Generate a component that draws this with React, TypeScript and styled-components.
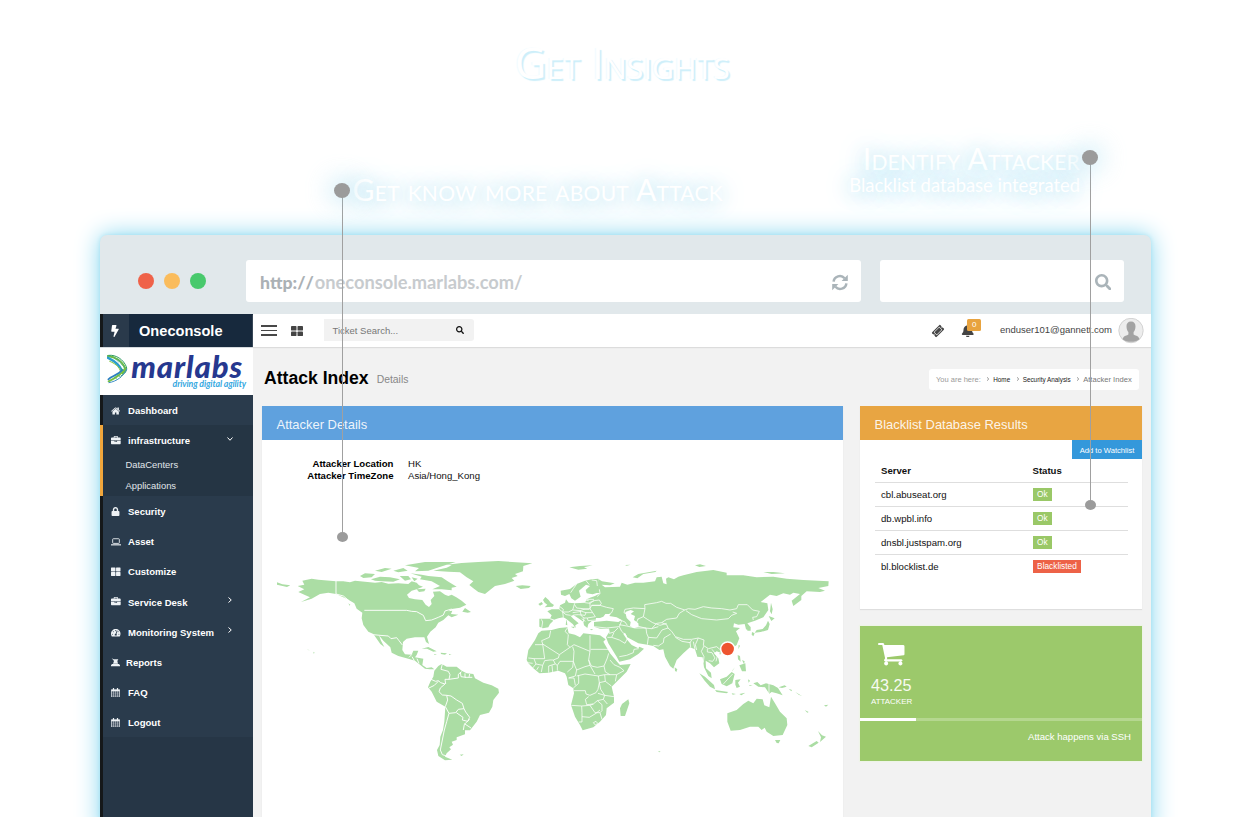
import React from 'react';
import styled, { createGlobalStyle, css } from 'styled-components';
import {
  FaBolt,
  FaLock,
  FaThLarge,
  FaTachometerAlt,
  FaSearch,
  FaBell,
  FaTicketAlt,
} from 'react-icons/fa';

const GlobalStyle = createGlobalStyle`
  * { box-sizing: border-box; }
  body { margin: 0; background: #fff; font-family: "Liberation Sans", Arial, sans-serif; }
  svg { display: block; flex: none; }
`;

const Page = styled.div`
  position: relative;
  width: 1250px;
  height: 817px;
  overflow: hidden;
  background: #fff;
  white-space: nowrap;
`;

const Hero = styled.header`
  height: 235px;
  padding: 37px 5px 0 0;
  text-align: center;
`;

const HeroTitle = styled.h1`
  margin: 0;
  font: 400 43px/52px "Open Sans", sans-serif;
  font-variant: small-caps;
  letter-spacing: 0.25px;
  color: #fff;
  text-shadow: 2px 2px 1px #cdeffa, -1px 0 1px #f2fbff;
`;

/* ---- browser frame ---- */

const Browser = styled.section`
  width: 1051px;
  height: 600px;
  margin-left: 100px;
  border-radius: 7px 7px 0 0;
  background: #e1e8eb;
  box-shadow: 0 0 24px 0 #83d5ef, 0 0 4px #c0ebf6;
`;

const Chrome = styled.div`
  display: flex;
  align-items: flex-start;
  height: 79px;
  padding: 25px 27px 0 38px;
`;

const Lights = styled.div`
  display: flex;
  flex: none;
  gap: 10px;
  width: 108px;
  padding-top: 13px;
`;

const Light = styled.i<{ $color: string }>`
  width: 16px;
  height: 16px;
  border-radius: 50%;
  background: ${(p) => p.$color};
`;

const ChromeField = styled.div<{ $width: number }>`
  display: flex;
  flex: none;
  align-items: center;
  width: ${(p) => p.$width}px;
  height: 42px;
  margin-right: 19px;
  padding: 2px 13px 0 14px;
  border-radius: 3px;
  background: #fff;
  color: #aab4b9;

  svg { margin-left: auto; }
`;

const Url = styled.span`
  font: 700 18.25px/22px Lato, sans-serif;
  color: #c7cbce;

  b {
    margin-right: 1px;
    color: #abb1b5;
    font-size: 17.6px;
    font-weight: 900;
    font-kerning: none;
  }
`;

const Console = styled.div`
  display: flex;
  height: 521px;
  background: #f2f2f2;
`;

/* ---- sidebar ---- */

const Sidebar = styled.aside`
  width: 153px;
  background: #263646;
`;

const Brand = styled.div`
  display: flex;
  align-items: center;
  height: 33px;
  border-left: 3px solid #15181a;
  background: #17293d;
  color: #fff;
  font-size: 14.6px;
  font-weight: 700;
`;

const BrandIcon = styled.span`
  display: grid;
  place-items: center;
  width: 26px;
  height: 33px;
  margin-right: 10px;
  padding-right: 3px;
  background: #2a3a4b;
`;

const Logo = styled.div`
  display: flex;
  height: 48px;
  padding: 6px 0 0 7px;
  background: #fff;
  border-top: 1px solid #d5dade;
`;

const LogoWords = styled.div`
  display: flex;
  flex: none;
  flex-direction: column;
  align-items: flex-end;
  width: 118px;
`;

const LogoName = styled.span`
  margin: -1px 3px 0 0;
  font: italic 900 31px/26px Lato, sans-serif;
  letter-spacing: 0.9px;
  color: #26388f;
`;

const LogoTag = styled.span`
  font: italic 700 8.8px/9px Lato, sans-serif;
  letter-spacing: -0.1px;
  color: #35a8df;
`;

const Menu = styled.nav`
  height: 422px;
  border-left: 3px solid #15181a;
`;

const Group = styled.div<{ $open?: boolean }>`
  background: #2a3b4c;
  ${(p) =>
    p.$open &&
    css`
      height: 71px;
      margin-left: -3px;
      border-left: 3px solid #f0a63c;
      background: #253544;
    `}
`;

const MenuItem = styled.div`
  display: flex;
  align-items: center;
  height: 30.15px;
  padding: 1px 20px 0 8px;
  color: #fff;
  font-size: 9.55px;
  font-weight: 700;

  > svg:last-child:not(:first-child) { margin: -4px 0 0 auto; }
`;

const MenuIcon = styled.span<{ $gap?: number }>`
  display: flex;
  width: ${(p) => p.$gap ?? 17}px;
  color: #eef2f5;
`;

const SubItem = styled.div`
  height: 20.4px;
  padding-left: 22.5px;
  font-size: 9.4px;
  line-height: 19px;
  color: #e1e6ea;
`;

/* ---- main column ---- */

const Main = styled.main`
  width: 898px;
`;

const TopBar = styled.div`
  display: flex;
  align-items: center;
  height: 33px;
  padding: 0 7px 0 8px;
  background: #fff;
  box-shadow: 0 1px 1px #dcdcdc;
  font-size: 9.5px;
  color: #444;
`;

const Burger = styled.span`
  width: 16px;
  height: 11px;
  margin: -1px 14px 0 0;
  background: linear-gradient(#484848 1.6px, transparent 1.6px 4.7px, #484848 4.7px 6.3px, transparent 6.3px 9.4px, #484848 9.4px);
`;

const SearchBox = styled.div`
  display: flex;
  align-items: center;
  justify-content: space-between;
  width: 150px;
  height: 22px;
  margin: -1px auto 0 21px;
  padding: 0 10px 0 8.5px;
  border-radius: 0 3px 3px 0;
  background: #f2f2f2;
  color: #777;
  font-size: 9.5px;

  svg { color: #111; }
`;

const Alerts = styled.span`
  position: relative;
  margin: 0 25px 0 17px;
`;

const Badge = styled.b`
  position: absolute;
  left: 5.5px;
  top: -5px;
  width: 14.5px;
  height: 12px;
  border-radius: 1.5px;
  background: #e8a33f;
  color: #fff;
  font: 400 8px/12px "Liberation Sans", sans-serif;
  text-align: center;
`;

const Account = styled.span`
  margin: -2px 6px 0 0;
`;

const PageHead = styled.div`
  display: flex;
  align-items: center;
  height: 59px;
  padding: 2px 12px 0 11px;
`;

const PageTitle = styled.h2`
  margin: 1px 8px 0 0;
  font-size: 17.6px;
  color: #000;
`;

const PageNote = styled.span`
  padding-top: 4px;
  font-size: 10.4px;
  color: #888;
`;

const Crumbs = styled.div`
  display: flex;
  align-items: center;
  width: 210px;
  height: 21px;
  margin: 3px 0 0 auto;
  padding-left: 7px;
  border-radius: 3px;
  background: #fff;
  font-size: 7.5px;
  color: #999;

  svg { margin: 0 3px 0 5.5px; color: #999; }
`;

const Crumb = styled.span<{ $last?: boolean }>`
  font-size: ${(p) => (p.$last ? 7.6 : 6.35)}px;
  color: ${(p) => (p.$last ? '#777' : '#222')};
`;

const Columns = styled.div`
  display: flex;
  align-items: flex-start;
  gap: 17px;
  padding-left: 9px;
`;

const SideColumn = styled.div`
  display: flex;
  flex-direction: column;
  gap: 16.5px;
`;

const Panel = styled.section<{ $width: number; $height: number }>`
  width: ${(p) => p.$width}px;
  height: ${(p) => p.$height}px;
  background: #fff;
  box-shadow: 0 1px 1px #dedede;
`;

const PanelHead = styled.h3<{ $color: string }>`
  height: 34px;
  margin: 0;
  padding: 1px 14.5px 0;
  background: ${(p) => p.$color};
  color: rgba(255, 255, 255, 0.9);
  font-size: 12.95px;
  font-weight: 400;
  line-height: 35px;
`;

const Facts = styled.dl`
  display: grid;
  grid-template-columns: 131.5px 1fr;
  column-gap: 14.5px;
  height: 100px;
  margin: 0;
  padding-top: 18px;
  align-content: start;
  font-size: 9.6px;
  line-height: 12.3px;
  color: #111;

  dt { font-weight: 700; text-align: right; color: #000; }
  dd { margin: 0; }
`;

const WatchButton = styled.button`
  display: block;
  width: 70px;
  height: 19px;
  margin-left: auto;
  padding: 1px 0 0;
  border: 0;
  background: #3498db;
  color: #fff;
  font: 7.6px "Liberation Sans", sans-serif;
`;

const Servers = styled.div`
  padding: 0 14px 0 15px;
`;

const ServerRow = styled.div<{ $head?: boolean }>`
  display: grid;
  grid-template-columns: 151.5px 1fr;
  align-items: center;
  height: 24px;
  padding-left: 6px;
  border-bottom: 1px solid #dedede;
  font-size: 9.6px;
  font-weight: ${(p) => (p.$head ? 700 : 400)};
  color: #111;

  &:last-child { border-color: transparent; }
`;

const Status = styled.span<{ $bad?: boolean }>`
  justify-self: start;
  height: 12.5px;
  padding: 0 4.6px;
  background: ${(p) => (p.$bad ? '#ed6247' : '#9ac867')};
  color: #fff;
  font-size: 8.3px;
  line-height: 13px;
`;

const Stat = styled.section`
  display: flex;
  flex-direction: column;
  width: 282px;
  height: 135px;
  background: #9cc96b;
  color: #fff;
  box-shadow: 0 0 1px 1px #eef4e7;

  > svg { margin: 13px 0 0 18px; }
`;

const StatValue = styled.span`
  margin: 9px 0 0 11px;
  font-size: 16.2px;
  line-height: 18px;
  color: #f7fbf2;
`;

const StatLabel = styled.span`
  margin: 3px 0 0 11px;
  font-size: 7.95px;
  line-height: 10px;
`;

const Track = styled.div`
  height: 3.5px;
  margin-top: 10.5px;
  background: #b5d78f;
`;

const TrackFill = styled.div`
  height: 100%;
  background: #fff;
`;

const StatFoot = styled.span`
  margin: 9px 11px 0 0;
  font-size: 9.55px;
  line-height: 14px;
  text-align: right;
`;

/* ---- callouts that lie over the browser ---- */

const Pin = styled.div<{ $x: number; $y: number; $length: number }>`
  position: absolute;
  left: ${(p) => p.$x}px;
  top: ${(p) => p.$y}px;
  width: 1px;
  height: ${(p) => p.$length}px;
  background: #a0a0a0;

  &::before, &::after {
    content: '';
    position: absolute;
    border-radius: 50%;
    background: #9b9b9b;
  }
  &::before {
    left: -8px;
    top: -7.5px;
    width: 16px;
    height: 15px;
    box-shadow: 0 0 24px 5px rgba(150, 215, 238, 0.45);
  }
  &::after { left: -5.5px; bottom: -5px; width: 11px; height: 10px; }
`;

const Callout = styled.div<{ $left: number; $top: number; $width: number; $right?: boolean }>`
  position: absolute;
  left: ${(p) => p.$left}px;
  top: ${(p) => p.$top}px;
  width: ${(p) => p.$width}px;
  text-align: ${(p) => (p.$right ? 'right' : 'left')};
  color: #fff;
  text-shadow: 0 2px 22px rgba(110, 200, 232, 0.95);
`;

const CalloutTitle = styled.div`
  font: 400 30.2px/30px Lato, sans-serif;
  font-variant: small-caps;
  letter-spacing: 0.23px;
`;

const CalloutText = styled.div`
  font: 400 18.4px/24px Lato, sans-serif;
`;

/* ---- drawings ---- */

const LogoMark = () => (
  <svg width="21" height="30" viewBox="0 0 63 90" fill="none" strokeLinecap="round">
    <path d="M2 6 C26 8 48 24 54 43 C56 49 53 54 47 58" stroke="#6cba48" strokeWidth="6" />
    <path d="M5 4 C28 1 50 18 58 38 C62 49 54 59 42 66" stroke="#2f9d62" strokeWidth="3" />
    <path d="M2 11 C20 20 38 33 45 50" stroke="#2c9dce" strokeWidth="7" />
    <path d="M8 22 C22 27 37 38 41 53" stroke="#88c83e" strokeWidth="3" />
    <path d="M5 82 C20 75 42 64 55 43" stroke="#77c043" strokeWidth="6" />
    <path d="M4 76 C14 66 33 64 46 47" stroke="#2b7fc0" strokeWidth="5" />
    <path d="M6 86 C30 82 49 67 59 46" stroke="#3d8fc8" strokeWidth="3" />
    <path d="M23 12 L35 24 M32 14 L42 29 M39 39 L51 51 M43 31 L55 42 M22 68 L31 77 M31 61 L41 71" stroke="#45ae7e" strokeWidth="2" />
  </svg>
);

const RefreshIcon = () => (
  <svg width="16" height="17" viewBox="0 0 16 17" fill="none" stroke="#aab4b9" strokeWidth="2.5">
    <path d="M1.6 7.6 A6.3 6.3 0 0 1 12.6 4.2" />
    <path d="M14.4 9.4 A6.3 6.3 0 0 1 3.4 12.8" />
    <path d="M15.8 .8 V7 H9.6 Z M.2 16.2 V10 H6.4 Z" fill="#aab4b9" stroke="none" />
  </svg>
);

const GridIcon = () => (
  <svg width="12" height="10" viewBox="0 0 36 30" fill="currentColor">
    <rect width="16.5" height="13.5" rx="2.5" />
    <rect x="19.5" width="16.5" height="13.5" rx="2.5" />
    <rect y="16.5" width="16.5" height="13.5" rx="2.5" />
    <rect x="19.5" y="16.5" width="16.5" height="13.5" rx="2.5" />
  </svg>
);

const Chevron = ({ size = 6, width = 2, down = false }: { size?: number; width?: number; down?: boolean }) => (
  <svg width={size} height={size} viewBox="0 0 12 12" fill="none" stroke="currentColor" strokeWidth={width}>
    <path d={down ? 'M1 3 L6 8.5 L11 3' : 'M3 1 L8.5 6 L3 11'} />
  </svg>
);

const HomeIcon = () => (
  <svg width="9.3" height="10" viewBox="0 0 1664 1792" fill="currentColor">
    <path d="M1408 992v480q0 26-19 45t-45 19h-384v-384h-256v384h-384q-26 0-45-19t-19-45v-480q0-1 .5-3t.5-3l575-474 575 474q1 2 1 6zm223-69l-62 74q-8 9-21 11h-3q-13 0-21-7l-692-577-692 577q-12 8-24 7-13-2-21-11l-62-74q-8-10-7-23.5t11-21.5l719-599q32-26 76-26t76 26l244 204v-195q0-14 9-23t23-9h192q14 0 23 9t9 23v408l219 182q10 8 11 21.5t-7 23.5z" />
  </svg>
);

const BriefcaseIcon = () => (
  <svg width="9.7" height="9.7" viewBox="0 0 1792 1792" fill="currentColor">
    <path d="M640 256h512v-128h-512v128zm1152 640v480q0 66-47 113t-113 47h-1472q-66 0-113-47t-47-113v-480h672v160q0 26 19 45t45 19h320q26 0 45-19t19-45v-160h672zm-768 0v128h-256v-128h256zm768-480v384h-1792v-384q0-66 47-113t113-47h352v-160q0-40 28-68t68-28h576q40 0 68 28t28 68v160h352q66 0 113 47t47 113z" />
  </svg>
);

const LaptopIcon = () => (
  <svg width="10" height="8" viewBox="0 0 30 24" fill="none" stroke="currentColor">
    <rect x="5" y="2.2" width="20" height="14" rx="2" strokeWidth="2.6" />
    <path d="M0 20.5 H30" strokeWidth="3.4" />
  </svg>
);

const DeskIcon = () => (
  <svg width="9" height="9" viewBox="0 0 27 27" fill="currentColor">
    <path d="M2 1 L8 4 H22 L19 9 L21 17 H6 L9 9 Z M3 18 H24 L27 22 V25 H0 V22 Z" />
  </svg>
);

const CalendarIcon = () => (
  <svg width="9" height="9.5" viewBox="0 0 27 28" fill="none" stroke="currentColor">
    <path d="M1.2 5 H25.8 V26.8 H1.2 Z" strokeWidth="2.2" />
    <path d="M1 7.5 H26" strokeWidth="5" />
    <path d="M7.5 0 V8 M19.5 0 V8" strokeWidth="3.6" />
    <path d="M1 15 H26 M1 21 H26 M7.5 9 V27 M13.5 9 V27 M19.5 9 V27" strokeWidth="1.3" />
  </svg>
);

const CartIcon = () => (
  <svg width="26.5" height="28.5" viewBox="0 0 1664 1792" fill="currentColor">
    <path d="M640 1536q0 52-38 90t-90 38-90-38-38-90 38-90 90-38 90 38 38 90zm896 0q0 52-38 90t-90 38-90-38-38-90 38-90 90-38 90 38 38 90zm128-1088v512q0 24-16.5 42.5t-40.5 21.5l-1044 122q13 60 13 70 0 16-24 64h920q26 0 45 19t19 45-19 45-45 19h-1024q-26 0-45-19t-19-45q0-11 8-31.5t16-36 21.5-40 15.5-29.5l-177-823h-204q-26 0-45-19t-19-45 19-45 45-19h256q16 0 28.5 6.5t19.5 15.5 13 24.5 8 26 5.5 29.5 4.5 26h1201q26 0 45 19t19 45z" />
  </svg>
);

const Avatar = () => (
  <svg width="26" height="26" viewBox="0 0 26 26">
    <circle cx="13" cy="12.5" r="12.2" fill="#ededed" stroke="#d2d2d2" strokeWidth="1" />
    <path d="M13 3.5 C16 3.5 17.7 5.5 17.5 8.5 C17.4 11.5 16.5 13 15.6 14.1 V16.5 C17 17.5 20 17.7 21 20 L21.4 21.3 C18 24.7 8 24.7 4.6 21.3 L5 20 C6 17.7 9 17.5 10.4 16.5 V14.1 C9.5 13 8.6 11.5 8.5 8.5 C8.3 5.5 10 3.5 13 3.5 Z" fill="#a3a3a3" />
  </svg>
);

const WEST_LAND = `
M36 127 L52 133 L76 136 L66 141 L36 134 Z
M112 122 L140 116 L160 119 L213 124 L235 124 L255 127 L270 122 L300 125 L330 128 L350 126 L370 131 L400 130 L430 132 L440 124 L455 128 L462 136 L474 140 L455 148 L440 152 L426 164 L432 174 L450 178 L472 180 L482 194 L492 201 L500 192 L497 180 L508 168 L504 155 L525 154 L540 164 L550 168 L560 164 L574 172 L590 182 L604 194 L585 203 L560 207 L550 214 L562 212 L558 222 L580 224 L560 232 L550 226 L535 240 L520 248 L512 262 L496 275 L486 290 L492 312 L483 306 L478 292 L450 292 L425 296 L414 306 L412 330 L420 343 L440 344 L445 332 L460 332 L455 345 L450 352 L475 356 L472 375 L485 384 L500 382 L508 388 L495 388 L480 386 L465 374 L450 362 L430 356 L400 348 L380 338 L376 322 L355 302 L342 286 L348 302 L358 321 L346 312 L325 282 L310 275 L295 255 L290 235 L292 218 L275 206 L268 190 L245 176 L213 162 L190 158 L165 162 L140 176 L108 186 L135 172 L118 164 L100 156 L118 148 L98 138 L118 134 Z
M285 108 L300 100 L330 102 L320 112 L295 114 Z
M318 118 L345 110 L375 112 L405 118 L385 125 L350 124 L330 122 Z
M330 92 L360 84 L380 86 L350 96 Z M385 92 L415 84 L428 92 L400 97 Z
M420 76 L480 66 L572 66 L545 74 L515 84 L490 92 L450 94 L462 84 Z
M436 100 L470 104 L490 108 L530 112 L548 124 L575 140 L560 143 L560 151 L530 148 L502 148 L525 138 L500 124 L465 118 L470 110 Z
M404 108 L430 108 L438 118 L420 122 Z M440 112 L458 116 L448 124 Z M455 148 L482 146 L478 154 L462 156 Z
M505 92 L545 83 L560 76 L545 74 L590 69 L640 66 L700 63 L802 70 L775 78 L774 94 L750 102 L758 108 L740 114 L748 122 L720 132 L690 138 L675 150 L660 162 L640 156 L625 145 L613 135 L625 124 L605 112 L585 97 L550 95 Z
M752 138 L772 136 L797 138 L792 144 L767 147 Z
M592 215 L600 204 L618 216 L608 218 Z
M470 326 L490 321 L515 334 L505 335 L486 326 Z M527 338 L546 340 L540 344 L528 342 Z M508 342 L516 344 L508 345 Z M552 342 L560 343 L552 345 Z
M125 328 L130 329 L135 332 Z M145 335 L149 338 L146 341 Z M250 190 L256 194 L254 197 Z
M584 644 L596 643 L590 648 Z
M520 378 L530 372 L545 380 L575 380 L590 392 L605 400 L625 402 L630 415 L655 428 L680 436 L700 446 L702 458 L685 480 L682 500 L672 518 L645 525 L635 545 L615 571 L600 571 L600 583 L575 592 L575 600 L560 605 L564 614 L553 622 L558 628 L545 640 L540 650 L562 659 L540 661 L520 648 L516 630 L524 615 L526 590 L534 570 L538 545 L541 500 L515 485 L500 455 L489 442 L496 425 L505 410 L508 392 Z`;

const WEST_BORDERS = `
M213 122 V162 M213 162 L235 168 L252 182
M298 211 H425 L440 214 L455 215 L475 226 L482 242 L500 240 L520 232 L535 225 L540 213 L560 207
M325 284 L345 286 L370 288 L378 296 L395 293 L402 302 L412 315 M432 352 L440 344
M532 372 L528 388 L550 394 L555 404 L552 418 L540 418 L542 432 M498 418 L512 424 L520 422 L527 428 L540 432 M492 444 L508 436 L520 424
M552 418 L580 414 L580 403 L590 395 M586 396 L588 410 L602 412 M600 400 V412 H622 M614 402 L612 412
M540 432 L526 444 L522 455 L532 465 L545 466 L548 480 L541 500 M545 466 L558 468 L575 480 L592 490 L597 506 L580 508 L572 518 L552 520 L541 500
M597 506 L602 516 L614 532 L608 544 L592 540 L594 532 L574 518 M614 538 L598 553 L595 570 M598 551 L618 564
M552 520 L545 545 L538 570 L532 600 L526 630 L532 644 L545 648 M441 350 L448 362 M456 356 L462 370`;

const EAST_LAND = `
M99 150 L106 141 L116 150 L122 158 L132 165 L128 170 L104 172 L112 164 L104 158 Z M85 162 L95 156 L99 162 L90 167 Z
M88 206 L120 206 L130 212 L120 222 L115 232 L98 235 L88 230 Z
M152 122 L180 117 L200 102 L225 92 L245 88 L265 86 L267 100 L272 125 L248 133 L230 130 L227 120 L240 108 L228 104 L207 122 L212 140 L195 152 L184 145 L178 132 L165 138 L153 134 Z
M112 184 L125 178 L148 178 L150 166 L165 158 L168 148 L176 158 L195 160 L225 158 L230 148 L240 143 L255 138 L270 130 L268 118 L266 88 L276 94 L314 100 L300 106 L275 104 L285 112 L330 110 L335 98 L352 104 L375 98 L400 98 L435 94 L440 82 L455 80 L460 100 L470 103 L468 86 L475 82 L492 88 L505 80 L520 76 L560 66 L610 60 L650 68 L650 76 L700 76 L740 82 L790 80 L830 86 L880 90 L956 94 L955 108 L925 114 L945 122 L930 126 L890 124 L874 138 L874 150 L850 168 L845 152 L870 132 L850 128 L840 134 L820 130 L800 138 L780 134 L752 156 L772 160 L775 180 L760 202 L735 212 L712 220 L722 232 L718 242 L708 238 L704 222 L685 224 L672 220 L670 232 L690 234 L678 244 L688 265 L680 285 L660 300 L640 302 L636 310 L620 304 L612 310 L625 325 L628 340 L612 352 L600 340 L587 332 L588 355 L603 368 L605 385 L595 378 L582 352 L578 322 L562 320 L555 298 L540 292 L520 310 L500 330 L490 356 L480 348 L465 320 L460 298 L448 300 L430 288 L412 284 L385 280 L360 266 L352 262 L345 248 L340 252 L352 270 L365 285 L385 295 L388 290 L402 296 L385 312 L360 328 L328 335 L320 320 L295 280 L288 262 L298 245 L296 236 L270 236 L252 230 L252 216 L290 212 L325 216 L335 210 L320 202 L298 198 L302 192 L286 192 L280 200 L270 204 L258 204 L256 212 L245 213 L235 222 L232 234 L222 226 L220 215 L205 205 L190 195 L182 198 L190 206 L206 220 L196 226 L197 234 L188 222 L168 206 L160 202 L145 205 L130 210 L120 206 L125 196 Z
M170 206 L172 226 L167 224 Z M182 230 L194 230 L192 235 Z M240 237 L250 238 L244 241 Z
M95 242 L125 240 L148 234 L172 232 L176 250 L195 254 L210 262 L220 250 L270 256 L287 268 L280 275 L300 310 L325 340 L330 345 L362 342 L350 365 L320 395 L305 410 L312 440 L312 458 L290 475 L288 495 L270 515 L250 532 L218 541 L210 525 L195 500 L183 465 L192 430 L190 415 L175 405 L170 380 L165 370 L145 362 L115 368 L88 370 L70 355 L55 340 L50 330 L55 300 L75 270 L85 250 Z
M330 475 L336 462 L355 448 L358 460 L345 498 L332 498 Z
M368 82 L385 72 L440 62 L436 66 L400 72 L382 85 Z
M178 52 L210 48 L248 46 L222 52 L232 56 L205 59 Z M345 45 L362 44 L350 47 Z M555 46 L570 43 L588 48 L568 51 Z M760 66 L790 66 L825 70 L785 72 Z
M783 158 L788 178 L785 193 L780 184 Z M776 198 L794 205 L784 213 Z M774 212 L779 222 L774 240 L752 246 L734 248 L740 240 L758 237 L768 226 Z M726 246 L734 250 L730 259 L725 254 Z
M712 230 L722 230 L722 242 L712 242 Z M686 284 L690 287 L685 298 Z M628 310 L634 310 L630 314 Z
M683 315 L690 318 L692 335 L684 328 Z M688 346 L706 340 L708 364 L696 364 Z M696 330 L704 334 L702 342 Z M675 352 L665 366 L668 360 Z
M494 352 L502 358 L499 366 L495 362 Z M568 370 L585 380 L612 405 L615 418 L600 410 L584 392 Z M615 420 L655 426 L650 430 L620 426 Z
M630 388 L650 380 L665 366 L674 372 L667 400 L650 409 L635 402 Z M676 390 L692 388 L684 398 L690 410 L680 414 L676 404 Z
M665 430 L678 432 L668 434 Z M688 432 L706 428 L694 436 Z M714 388 L720 392 L716 398 Z M716 406 L728 405 L720 408 Z
M730 400 L742 396 L752 406 L768 400 L790 406 L804 414 L818 436 L800 430 L785 426 L778 431 L765 412 L745 410 Z M806 412 L824 406 L830 410 L816 414 Z M836 416 L846 420 L844 424 Z M856 426 L876 438 L866 434 Z M884 480 L896 486 L892 488 Z M942 466 L955 464 L948 470 Z
M652 490 L680 480 L700 462 L715 452 L730 460 L740 446 L758 448 L763 466 L778 472 L783 440 L795 460 L810 485 L830 505 L832 525 L818 555 L790 558 L770 545 L764 533 L755 540 L745 530 L720 530 L690 540 L662 542 L652 515 Z
M795 570 L811 570 L806 580 L800 579 Z
M924 543 L936 556 L948 560 L930 576 L933 562 Z M895 588 L920 573 L926 578 L905 592 Z M444 604 L452 604 L448 607 Z`;

const EAST_BORDERS = `
M94 208 L98 216 L95 234 M120 206 L132 210 M148 178 L158 186 L160 202 M150 170 L160 178 L158 186 L168 194 L182 196 M158 186 L175 186 L188 180 L194 160 M188 180 L210 182 L222 178 L240 176 L240 160 L225 158 M194 164 L200 174 L238 178
M188 188 L215 184 L228 188 L225 196 L205 194 L190 195 M210 182 L214 198 L222 204 L220 216 M228 188 L248 188 L256 200 L232 204 L222 204 M232 204 L234 212 L256 210 M215 206 L226 214
M240 160 L252 152 L268 150 L274 160 L270 166 L245 166 M230 148 L252 148 M238 158 L252 152 M226 150 L236 152 M248 188 L240 176 L245 166 L270 166 L290 172 L310 176 L305 188 L298 192
M200 102 L190 116 L182 128 M228 92 L238 104 M245 90 L260 92 L262 108 M268 118 L270 130 L262 140
M345 178 L370 174 L405 176 L404 164 L440 158 L455 154 L468 160 L482 160 L500 172 L524 180 L535 176 L555 178 L580 170 L605 174 L635 176 L660 180 L680 176 L685 164 L712 164 L728 180 L748 184 L740 200 L728 202 L730 210
M528 182 L545 194 L575 206 L620 210 L655 206 L665 196 L680 190 L668 186 M524 180 L508 190 L500 204 L470 208 L455 218 L470 224 L474 234 L485 244 L496 260 L520 268 L545 268 L565 264 L582 270 L580 286 L595 296 L620 290 L634 302
M345 178 L342 188 L356 196 M382 208 L400 200 L412 208 L428 218 L450 226 L470 220 M405 176 L400 200 M385 206 L375 226 L405 234 L425 236 L445 230 M425 236 L440 220 L455 218
M408 234 L410 250 L415 262 L412 284 M415 262 L440 264 L456 240 L474 234 M430 286 L445 288 L460 278 L462 264 L482 252 M496 262 L516 274 L540 278 L545 270 M540 276 L542 292 M550 275 L555 298 M565 264 L556 284 L560 300 M582 288 L574 304 L582 320 L580 338
M592 296 L592 306 L606 308 L615 324 L608 334 L596 332 M606 298 L622 318 L618 334 M252 230 L290 234 L328 230 L335 212 M328 230 L335 244 L350 258 M328 224 L350 228 L376 234 L408 234 M296 236 L298 250 L312 246 L324 234 M292 262 L305 262 L312 248 M305 262 L328 270 L345 280 L352 266 M328 320 L350 316 L370 308 L372 298 L386 296 M330 210 L345 216 L352 226
M172 234 L165 244 L175 254 L172 284 L180 292 L148 314 L98 282 L95 272 L118 262 L122 242 M75 284 H98 M98 282 L104 326 L72 326 M148 314 L145 324 L130 330 M180 292 L192 284 L240 304 V256 M242 298 H294 M240 304 L236 330 L240 346 L225 350 L200 360 L195 348 L190 334 L192 304 L188 290
M55 324 L72 326 L78 342 L98 346 L104 332 L120 330 L130 330 L136 342 L142 346 L150 334 L190 334 M78 342 L68 354 M98 346 L94 366 M116 348 V368 M116 348 L136 342 M126 346 L128 366 M142 346 L142 362 M190 334 L188 352 L172 366 M52 338 L68 340 M80 360 L86 350
M236 330 L244 348 L262 352 L282 348 L292 324 L296 310 M282 348 L286 366 L300 374 L320 374 L342 362 L330 352 L312 344 L300 330 M320 374 L316 394 M200 360 L196 378 L176 384 M200 378 L225 372 L265 378 L284 374 L300 374 M206 376 L206 400 L190 414 M240 346 L255 372 M265 378 L268 398 L264 418 L258 428 L240 436 L228 432 L226 422 L192 422 M176 384 H192 L196 406
M284 374 L286 394 L268 398 M286 394 L304 408 M268 398 L272 418 L284 436 L312 440 M264 430 L284 436 L280 448 L262 452 L250 462 L230 464 L226 448 L236 440 M184 466 L215 468 L240 466 L250 462 M215 468 L216 488 L216 516 L206 516 M216 500 L238 502 L258 490 L270 480 M240 466 L255 488 L270 488 M262 452 L276 464 L276 482 L270 488 L276 508 M250 518 L258 514 L263 520 L256 525 Z M280 448 L292 462 M777 402 V430 M640 402 L668 372`;

const CASPIAN = 'M346 186 L362 180 L372 184 L362 192 L375 198 L372 210 L385 220 L386 230 L372 235 L360 228 L362 216 L350 204 Z';

const WorldMap = () => (
  <svg width="581" height="230" viewBox="0 0 581 230" strokeLinejoin="round">
    <g transform="translate(3 0) scale(.33333)">
      <path d={WEST_LAND} fill="#abdda4" />
      <path d={WEST_BORDERS} fill="none" stroke="#fff" strokeWidth="2.8" />
    </g>
    <g transform="translate(248 10) scale(.33333)">
      <path d={EAST_LAND} fill="#abdda4" />
      <path d={CASPIAN} fill="#fff" />
      <path d={EAST_BORDERS} fill="none" stroke="#fff" strokeWidth="2.3" />
      <circle cx="653" cy="297" r="21" fill="#ee5530" stroke="#fff" strokeWidth="4.5" />
    </g>
  </svg>
);

/* ---- page ---- */

const afterInfrastructure = [
  { icon: <FaLock size={9} />, label: 'Security' },
  { icon: <LaptopIcon />, label: 'Asset' },
  { icon: <FaThLarge size={9.5} />, label: 'Customize' },
  { icon: <BriefcaseIcon />, label: 'Service Desk', more: true },
  { icon: <FaTachometerAlt size={9.5} />, label: 'Monitoring System', more: true },
  { icon: <DeskIcon />, label: 'Reports', gap: 15 },
  { icon: <CalendarIcon />, label: 'FAQ' },
  { icon: <CalendarIcon />, label: 'Logout' },
];

const servers = [
  { name: 'cbl.abuseat.org', status: 'Ok' },
  { name: 'db.wpbl.info', status: 'Ok' },
  { name: 'dnsbl.justspam.org', status: 'Ok' },
  { name: 'bl.blocklist.de', status: 'Blacklisted' },
];

export default function App() {
  return (
    <Page>
      <GlobalStyle />
      <Hero>
        <HeroTitle>Get Insights</HeroTitle>
      </Hero>

      <Browser>
        <Chrome>
          <Lights>
            <Light $color="#ef6249" />
            <Light $color="#fabc5c" />
            <Light $color="#48c96c" />
          </Lights>
          <ChromeField $width={615}>
            <Url><b>http://</b>oneconsole.marlabs.com/</Url>
            <RefreshIcon />
          </ChromeField>
          <ChromeField $width={244}>
            <FaSearch size={16.5} />
          </ChromeField>
        </Chrome>

        <Console>
          <Sidebar>
            <Brand>
              <BrandIcon><FaBolt size={12} /></BrandIcon>
              Oneconsole
            </Brand>
            <Logo>
              <LogoMark />
              <LogoWords>
                <LogoName>marlabs</LogoName>
                <LogoTag>driving digital agility</LogoTag>
              </LogoWords>
            </Logo>
            <Menu>
              <Group>
                <MenuItem><MenuIcon><HomeIcon /></MenuIcon>Dashboard</MenuItem>
              </Group>
              <Group $open>
                <MenuItem>
                  <MenuIcon><BriefcaseIcon /></MenuIcon>infrastructure<Chevron down />
                </MenuItem>
                <SubItem>DataCenters</SubItem>
                <SubItem>Applications</SubItem>
              </Group>
              <Group>
                {afterInfrastructure.map((item) => (
                  <MenuItem key={item.label}>
                    <MenuIcon $gap={item.gap}>{item.icon}</MenuIcon>
                    {item.label}
                    {item.more && <Chevron />}
                  </MenuItem>
                ))}
              </Group>
            </Menu>
          </Sidebar>

          <Main>
            <TopBar>
              <Burger />
              <GridIcon />
              <SearchBox>Ticket Search...<FaSearch size={8} /></SearchBox>
              <FaTicketAlt size={12} transform="rotate(-45) scale(1 .82)" />
              <Alerts><FaBell size={13.5} /><Badge>0</Badge></Alerts>
              <Account>enduser101@gannett.com</Account>
              <Avatar />
            </TopBar>

            <PageHead>
              <PageTitle>Attack Index</PageTitle>
              <PageNote>Details</PageNote>
              <Crumbs>
                You are here:
                <Chevron size={4} width={3} />
                <Crumb>Home</Crumb>
                <Chevron size={4} width={3} />
                <Crumb>Security Analysis</Crumb>
                <Chevron size={4} width={3} />
                <Crumb $last>Attacker Index</Crumb>
              </Crumbs>
            </PageHead>

            <Columns>
              <Panel $width={581} $height={440}>
                <PanelHead $color="#5fa1de">Attacker Details</PanelHead>
                <Facts>
                  <dt>Attacker Location</dt>
                  <dd>HK</dd>
                  <dt>Attacker TimeZone</dt>
                  <dd>Asia/Hong_Kong</dd>
                </Facts>
                <WorldMap />
              </Panel>

              <SideColumn>
                <Panel $width={282} $height={203}>
                  <PanelHead $color="#e8a542">Blacklist Database Results</PanelHead>
                  <WatchButton>Add to Watchlist</WatchButton>
                  <Servers>
                    <ServerRow $head><span>Server</span><span>Status</span></ServerRow>
                    {servers.map((s) => (
                      <ServerRow key={s.name}>
                        <span>{s.name}</span>
                        <Status $bad={s.status !== 'Ok'}>{s.status}</Status>
                      </ServerRow>
                    ))}
                  </Servers>
                </Panel>

                <Stat>
                  <CartIcon />
                  <StatValue>43.25</StatValue>
                  <StatLabel>ATTACKER</StatLabel>
                  <Track><TrackFill style={{ width: '20%' }} /></Track>
                  <StatFoot>Attack happens via SSH</StatFoot>
                </Stat>
              </SideColumn>
            </Columns>
          </Main>
        </Console>
      </Browser>

      <Callout $left={352.5} $top={174} $width={375}>
        <CalloutTitle>Get know more about Attack</CalloutTitle>
      </Callout>
      <Callout $left={840} $top={143} $width={240} $right>
        <CalloutTitle>Identify Attacker</CalloutTitle>
        <CalloutText>Blacklist database integrated</CalloutText>
      </Callout>
      <Pin $x={342} $y={190} $length={347} />
      <Pin $x={1090} $y={157} $length={348} />
    </Page>
  );
}
